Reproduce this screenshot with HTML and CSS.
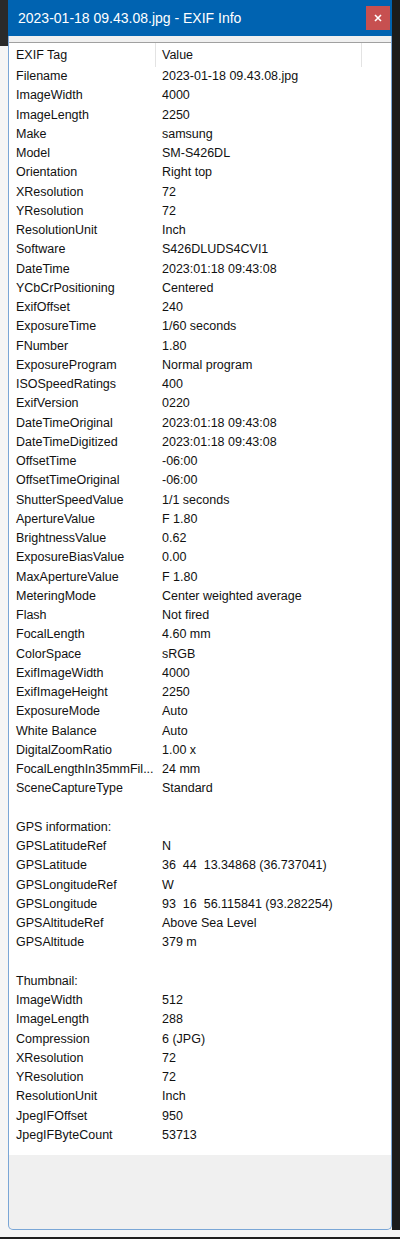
FILE: index.html
```html
<!DOCTYPE html>
<html lang="en">
<head>
<meta charset="utf-8">
<title>EXIF Info</title>
<link rel="stylesheet" href="styles.css">
</head>
<body>
<div class="screen">
  <div class="gutter-left"></div>
  <div class="window">
    <div class="titlebar">
      <span class="title">2023-01-18 09.43.08.jpg - EXIF Info</span>
      <div class="close"><svg width="8" height="8" viewBox="0 0 8 8"><path d="M1 1L7 7M7 1L1 7" stroke="#fff" stroke-width="1.6" fill="none"/></svg></div>
    </div>
    <div class="client">
      <div class="list">
        <div class="header">
          <div class="hcell">EXIF Tag</div>
          <div class="hcell">Value</div>
          <div class="hcell last"></div>
        </div>
        <div class="rows">
          <div class="row"><span class="k">Filename</span><span class="v">2023-01-18 09.43.08.jpg</span></div>
          <div class="row"><span class="k">ImageWidth</span><span class="v">4000</span></div>
          <div class="row"><span class="k">ImageLength</span><span class="v">2250</span></div>
          <div class="row"><span class="k">Make</span><span class="v">samsung</span></div>
          <div class="row"><span class="k">Model</span><span class="v">SM-S426DL</span></div>
          <div class="row"><span class="k">Orientation</span><span class="v">Right top</span></div>
          <div class="row"><span class="k">XResolution</span><span class="v">72</span></div>
          <div class="row"><span class="k">YResolution</span><span class="v">72</span></div>
          <div class="row"><span class="k">ResolutionUnit</span><span class="v">Inch</span></div>
          <div class="row"><span class="k">Software</span><span class="v">S426DLUDS4CVI1</span></div>
          <div class="row"><span class="k">DateTime</span><span class="v">2023:01:18 09:43:08</span></div>
          <div class="row"><span class="k">YCbCrPositioning</span><span class="v">Centered</span></div>
          <div class="row"><span class="k">ExifOffset</span><span class="v">240</span></div>
          <div class="row"><span class="k">ExposureTime</span><span class="v">1/60 seconds</span></div>
          <div class="row"><span class="k">FNumber</span><span class="v">1.80</span></div>
          <div class="row"><span class="k">ExposureProgram</span><span class="v">Normal program</span></div>
          <div class="row"><span class="k">ISOSpeedRatings</span><span class="v">400</span></div>
          <div class="row"><span class="k">ExifVersion</span><span class="v">0220</span></div>
          <div class="row"><span class="k">DateTimeOriginal</span><span class="v">2023:01:18 09:43:08</span></div>
          <div class="row"><span class="k">DateTimeDigitized</span><span class="v">2023:01:18 09:43:08</span></div>
          <div class="row"><span class="k">OffsetTime</span><span class="v">-06:00</span></div>
          <div class="row"><span class="k">OffsetTimeOriginal</span><span class="v">-06:00</span></div>
          <div class="row"><span class="k">ShutterSpeedValue</span><span class="v">1/1 seconds</span></div>
          <div class="row"><span class="k">ApertureValue</span><span class="v">F 1.80</span></div>
          <div class="row"><span class="k">BrightnessValue</span><span class="v">0.62</span></div>
          <div class="row"><span class="k">ExposureBiasValue</span><span class="v">0.00</span></div>
          <div class="row"><span class="k">MaxApertureValue</span><span class="v">F 1.80</span></div>
          <div class="row"><span class="k">MeteringMode</span><span class="v">Center weighted average</span></div>
          <div class="row"><span class="k">Flash</span><span class="v">Not fired</span></div>
          <div class="row"><span class="k">FocalLength</span><span class="v">4.60 mm</span></div>
          <div class="row"><span class="k">ColorSpace</span><span class="v">sRGB</span></div>
          <div class="row"><span class="k">ExifImageWidth</span><span class="v">4000</span></div>
          <div class="row"><span class="k">ExifImageHeight</span><span class="v">2250</span></div>
          <div class="row"><span class="k">ExposureMode</span><span class="v">Auto</span></div>
          <div class="row"><span class="k">White Balance</span><span class="v">Auto</span></div>
          <div class="row"><span class="k">DigitalZoomRatio</span><span class="v">1.00 x</span></div>
          <div class="row"><span class="k">FocalLengthIn35mmFil...</span><span class="v">24 mm</span></div>
          <div class="row"><span class="k">SceneCaptureType</span><span class="v">Standard</span></div>
          <div class="row"><span class="k"></span><span class="v"></span></div>
          <div class="row"><span class="k">GPS information:</span><span class="v"></span></div>
          <div class="row"><span class="k">GPSLatitudeRef</span><span class="v">N</span></div>
          <div class="row"><span class="k">GPSLatitude</span><span class="v">36  44  13.34868 (36.737041)</span></div>
          <div class="row"><span class="k">GPSLongitudeRef</span><span class="v">W</span></div>
          <div class="row"><span class="k">GPSLongitude</span><span class="v">93  16  56.115841 (93.282254)</span></div>
          <div class="row"><span class="k">GPSAltitudeRef</span><span class="v">Above Sea Level</span></div>
          <div class="row"><span class="k">GPSAltitude</span><span class="v">379 m</span></div>
          <div class="row"><span class="k"></span><span class="v"></span></div>
          <div class="row"><span class="k">Thumbnail:</span><span class="v"></span></div>
          <div class="row"><span class="k">ImageWidth</span><span class="v">512</span></div>
          <div class="row"><span class="k">ImageLength</span><span class="v">288</span></div>
          <div class="row"><span class="k">Compression</span><span class="v">6 (JPG)</span></div>
          <div class="row"><span class="k">XResolution</span><span class="v">72</span></div>
          <div class="row"><span class="k">YResolution</span><span class="v">72</span></div>
          <div class="row"><span class="k">ResolutionUnit</span><span class="v">Inch</span></div>
          <div class="row"><span class="k">JpegIFOffset</span><span class="v">950</span></div>
          <div class="row"><span class="k">JpegIFByteCount</span><span class="v">53713</span></div>
        </div>
      </div>
      <div class="footer"></div>
    </div>
  </div>
  <div class="gutter-right"></div>
</div>
<div class="below"></div>
<div class="edge"></div>
</body>
</html>
```
FILE: styles.css
```css
html, body {
  margin: 0;
  padding: 0;
}
body {
  width: 400px;
  height: 1239px;
  overflow: hidden;
  background: #f5f5f5;
  font-family: "Liberation Sans", Arial, sans-serif;
  color: #111;
}
.screen {
  display: flex;
  height: 1230px;
}
.gutter-left {
  width: 8px;
  flex: none;
  background: linear-gradient(#2a2a2a 0 46px, #f5f5f5 46px);
}
.gutter-right {
  width: 8px;
  flex: none;
  background: #1c1c1c;
}
.window {
  width: 384px;
  flex: none;
  display: flex;
  flex-direction: column;
}
.titlebar {
  height: 36px;
  flex: none;
  background: #0063b1;
  display: flex;
  align-items: center;
  justify-content: space-between;
  padding: 0 2px 0 10px;
}
.title {
  color: #fff;
  font-size: 14px;
  white-space: nowrap;
}
.close {
  width: 24px;
  height: 24px;
  background: #c75050;
  display: flex;
  align-items: center;
  justify-content: center;
}
.client {
  flex: 1;
  display: flex;
  flex-direction: column;
  background: #f0f0f0;
  border: 1px solid #7aa6d6;
  border-top: none;
  border-radius: 0 0 5px 5px;
  padding-top: 6px;
}
.list {
  height: 1112px;
  flex: none;
  background: #fff;
  border-top: 1px solid #a0a0a0;
}
.header {
  display: grid;
  grid-template-columns: 147px 206px 1fr;
  height: 23px;
}
.hcell {
  font-size: 12.5px;
  line-height: 24px;
  padding-left: 7px;
  border-right: 1px solid #e3e3e3;
  white-space: nowrap;
}
.hcell + .hcell {
  padding-left: 6px;
}
.hcell.last {
  border-right: none;
}
.row {
  display: grid;
  grid-template-columns: 147px 206px;
  height: 19.25px;
  line-height: 21px;
  font-size: 12.5px;
}
.k {
  padding-left: 7px;
  white-space: nowrap;
  overflow: hidden;
}
.v {
  padding-left: 6px;
  white-space: pre;
  overflow: hidden;
}
.footer {
  flex: 1;
}
.below {
  height: 7px;
  background: #f5f5f5;
}
.edge {
  height: 2px;
  background: #202020;
}
```
